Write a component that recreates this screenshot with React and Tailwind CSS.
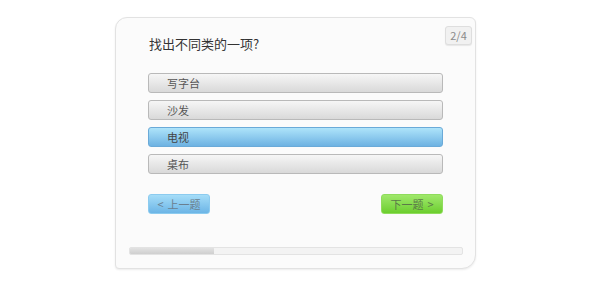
const options = ['写字台', '沙发', '电视', '桌布'];
const selected = 2;

export default function App() {
  return (
    <div
      className="w-[590px] h-[300px] bg-white pt-[17px] pl-[115px]"
      style={{ fontFamily: '"Noto Sans CJK SC", "Liberation Sans", sans-serif' }}
    >
      <div className="relative w-[361px] h-[252px] bg-[#fbfbfb] border border-[#e2e2e2] rounded-tl-[12px] rounded-tr-[6px] rounded-bl-[4px] rounded-br-[14px] shadow-[0_1px_2px_rgba(0,0,0,0.08)]">
        <div className="absolute top-[8px] right-[3px] w-[27px] h-[19px] rounded-[3px] bg-[#f1f1f1] border border-[#dedede] shadow-[0_1px_1px_rgba(0,0,0,0.08)] flex items-center justify-center text-[11px] text-[#8a8a8a]">
          2/4
        </div>
        <div className="pl-[33px] pt-[17px] text-[13px] leading-[18px] text-[#333]">找出不同类的一项?</div>
        <div className="mt-[20px] ml-[32px] w-[295px] flex flex-col gap-[7px]">
          {options.map((o, i) => (
            <div
              key={o}
              className={
                i === selected
                  ? 'h-[20px] rounded-[3px] border border-[#6aaad8] bg-gradient-to-b from-[#aee4fa] to-[#6db2e2] pl-[18px] text-[11px] leading-[18px] text-[#444]'
                  : 'h-[20px] rounded-[3px] border border-[#b9b9b9] bg-gradient-to-b from-[#f6f6f6] to-[#d9d9d9] pl-[18px] text-[11px] leading-[18px] text-[#555]'
              }
            >
              {o}
            </div>
          ))}
        </div>
        <div className="mt-[20px] ml-[32px] w-[295px] flex justify-between">
          <div className="w-[62px] h-[20px] rounded-[3px] border border-[#8ccbef] bg-gradient-to-b from-[#a5ddf8] to-[#6cb5e6] flex items-center justify-center gap-[4px] text-[11px] text-[#6a7f90]">
            <span>&lt;</span><span>上一题</span>
          </div>
          <div className="w-[62px] h-[20px] rounded-[3px] border border-[#8fdc5c] bg-gradient-to-b from-[#9fe86a] to-[#6cce2c] flex items-center justify-center gap-[4px] text-[11px] text-[#5b7a48]">
            <span>下一题</span><span>&gt;</span>
          </div>
        </div>
        <div className="mt-[33px] ml-[13px] w-[334px] h-[8px] rounded-[2px] bg-[#f3f3f3] border border-[#e3e3e3] overflow-hidden">
          <div className="w-[84px] h-full bg-gradient-to-b from-[#e2e2e2] to-[#cfcfcf]" />
        </div>
      </div>
    </div>
  );
}
